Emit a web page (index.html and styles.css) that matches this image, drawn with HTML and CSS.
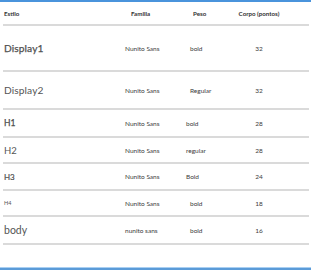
FILE: index.html
```html
<!DOCTYPE html>
<html lang="pt">
<head>
<meta charset="utf-8">
<link rel="stylesheet" href="styles.css">
</head>
<body>
<div class="sheet">
  <div class="table">
    <div class="row head">
      <div class="c1">Estilo</div>
      <div class="c2">Familia</div>
      <div class="c3">Peso</div>
      <div class="c4">Corpo (pontos)</div>
    </div>
    <div class="row r-d1">
      <div class="c1 s-d1">Display1</div>
      <div class="c2">Nunito Sans</div>
      <div class="c3">bold</div>
      <div class="c4">32</div>
    </div>
    <div class="row r-d2">
      <div class="c1 s-d2">Display2</div>
      <div class="c2">Nunito Sans</div>
      <div class="c3">Regular</div>
      <div class="c4">32</div>
    </div>
    <div class="row r-h1">
      <div class="c1 s-h1">H1</div>
      <div class="c2">Nunito Sans</div>
      <div class="c3 near">bold</div>
      <div class="c4">28</div>
    </div>
    <div class="row r-h2">
      <div class="c1 s-h2">H2</div>
      <div class="c2">Nunito Sans</div>
      <div class="c3 near">regular</div>
      <div class="c4">28</div>
    </div>
    <div class="row r-h3">
      <div class="c1 s-h3">H3</div>
      <div class="c2">Nunito Sans</div>
      <div class="c3 near">Bold</div>
      <div class="c4">24</div>
    </div>
    <div class="row r-h4">
      <div class="c1 s-h4">H4</div>
      <div class="c2">Nunito Sans</div>
      <div class="c3">bold</div>
      <div class="c4">18</div>
    </div>
    <div class="row r-body">
      <div class="c1 s-body">body</div>
      <div class="c2">nunito sans</div>
      <div class="c3">bold</div>
      <div class="c4">16</div>
    </div>
  </div>
</div>
</body>
</html>
```
FILE: styles.css
```css
html, body {
  margin: 0;
  padding: 0;
  background: #fff;
}
body {
  width: 311px;
  height: 270px;
  overflow: hidden;
  font-family: Lato, "Noto Sans", sans-serif;
  color: #444;
}
.sheet {
  box-sizing: border-box;
  height: 270px;
  border-top: 2px solid #4a94dc;
  border-bottom: 2px solid #5b9bd8;
  box-shadow: inset 0 -1px 0 #a9cff2;
  padding: 0 2px 0 3px;
}
.table {
  display: flex;
  flex-direction: column;
}
.row {
  display: grid;
  grid-template-columns: 122px 58px 45px 62px 1fr;
  align-items: center;
  border-bottom: 2px solid #dadada;
  font-size: 6.5px;
  box-sizing: border-box;
}
.row .c1 { padding-left: 1px; color: #555; }
.row .c2 { color: #3c3c3c; }
.row .c3 { padding-left: 7px; color: #3c3c3c; }
.row .c3.near { padding-left: 3px; }
.row .c4 { text-align: center; color: #3c3c3c; }

.head { height: 24px; font-weight: 700; color: #333; font-size: 6.2px; }
.head .c1, .head .c2, .head .c3, .head .c4 { color: #333; }
.head .c2 { padding-left: 6px; }
.head .c3 { padding-left: 10px; }
.r-d1 { height: 46px; }
.r-d2 { height: 38px; }
.r-h1 { height: 28px; }
.r-h2 { height: 26px; }
.r-h3 { height: 27px; }
.r-h4 { height: 26px; }
.r-body { height: 28px; }

.s-d1 { font-size: 10.2px; font-weight: 400; color: #484848; -webkit-text-stroke: 0.25px #484848; letter-spacing: 0.1px; }
.s-d2 { font-size: 10.2px; font-weight: 400; color: #707070; letter-spacing: 0.1px; }
.s-h1 { font-size: 8.5px; font-weight: 400; color: #3f3f3f; -webkit-text-stroke: 0.25px #3f3f3f; }
.s-h2 { font-size: 9.5px; font-weight: 400; color: #777; }
.s-h3 { font-size: 8px; font-weight: 400; color: #4a4a4a; -webkit-text-stroke: 0.2px #4a4a4a; }
.s-h4 { font-size: 5.5px; font-weight: 400; color: #555; }
.s-body { font-size: 10.5px; font-weight: 400; color: #666; }
```
